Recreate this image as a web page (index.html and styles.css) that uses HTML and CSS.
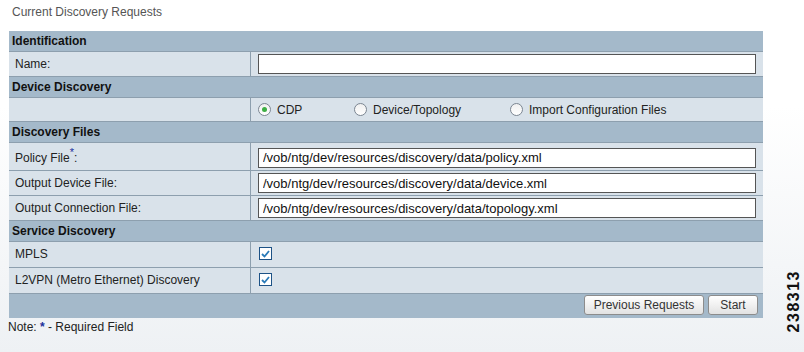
FILE: index.html
```html
<!DOCTYPE html>
<html lang="en">
<head>
  <meta charset="UTF-8" />
  <title>Current Discovery Requests</title>
  <link rel="stylesheet" href="styles.css">
</head>
<body>
  <div class="page">
    <div class="title">Current Discovery Requests</div>

    <table class="form">
      <tr class="head"><td colspan="2">Identification</td></tr>
      <tr>
        <td class="label">Name:</td>
        <td><input class="text" value="" /></td>
      </tr>

      <tr class="head"><td colspan="2">Device Discovery</td></tr>
      <tr class="opts">
        <td class="label"></td>
        <td>
          <div class="radios">
            <span class="opt opt-cdp"><span class="radio on"></span>CDP</span>
            <span class="opt opt-dev"><span class="radio"></span>Device/Topology</span>
            <span class="opt"><span class="radio"></span>Import Configuration Files</span>
          </div>
        </td>
      </tr>

      <tr class="head"><td colspan="2">Discovery Files</td></tr>
      <tr class="tall">
        <td class="label">Policy File<sup class="req">*</sup>:</td>
        <td><input class="text" value="/vob/ntg/dev/resources/discovery/data/policy.xml" /></td>
      </tr>
      <tr>
        <td class="label">Output Device File:</td>
        <td><input class="text" value="/vob/ntg/dev/resources/discovery/data/device.xml" /></td>
      </tr>
      <tr>
        <td class="label">Output Connection File:</td>
        <td><input class="text" value="/vob/ntg/dev/resources/discovery/data/topology.xml" /></td>
      </tr>

      <tr class="head"><td colspan="2">Service Discovery</td></tr>
      <tr class="chk">
        <td class="label">MPLS</td>
        <td><span class="check"><svg width="9" height="8" viewBox="0 0 9 8"><path d="M1 4 L3.5 6.5 L8 1" fill="none" stroke="#2a7ab8" stroke-width="1.8"/></svg></span></td>
      </tr>
      <tr class="chk">
        <td class="label">L2VPN (Metro Ethernet) Discovery</td>
        <td><span class="check"><svg width="9" height="8" viewBox="0 0 9 8"><path d="M1 4 L3.5 6.5 L8 1" fill="none" stroke="#2a7ab8" stroke-width="1.8"/></svg></span></td>
      </tr>

      <tr class="foot">
        <td colspan="2">
          <div class="buttons">
            <button class="btn btn-prev">Previous Requests</button>
            <button class="btn btn-start">Start</button>
          </div>
        </td>
      </tr>
    </table>

    <div class="note">Note: <span class="req">*</span> - Required Field</div>
  </div>

  <div class="figno">238313</div>
</body>
</html>
```

FILE: styles.css
```css
html, body { height: 100%; }
body {
  margin: 0;
  font-family: "Liberation Sans", Arial, sans-serif;
  font-size: 12px;
  color: #222;
  background: linear-gradient(to bottom, #ffffff 0%, #ffffff 30%, #eef1f4 100%);
  position: relative;
  overflow: hidden;
}
.page { padding: 5px 0 0 9px; width: 754px; }
.title { color: #555; padding: 0 0 0 3px; height: 26px; line-height: 14px; }

/* Form table */
.form { width: 754px; border-collapse: collapse; }
.form td { padding: 0; border-top: 1px solid #8d9fae; background: #d9e2ea; height: 24px; }
.form tr.head td {
  background: #a4b9ca;
  font-weight: bold;
  color: #111;
  height: 20px;
  padding-left: 3px;
}
.form tr:first-child td { border-top: none; }
.form tr.opts td { height: 23px; }
.form tr.tall td { height: 25px; padding-top: 2px; }
.form tr.chk td { height: 23px; padding-bottom: 2px; }
.form td.label { width: 238px; padding-left: 6px; border-right: 1px solid #8d9fae; }
.form td:not(.label) { padding-left: 7px; padding-right: 7px; }

.text {
  display: block;
  box-sizing: border-box;
  width: 498px;
  height: 20px;
  border: 1px solid #555;
  font: inherit;
  font-size: 13px;
  padding: 0 4px;
  color: #111;
  background: #fff;
}

.req { color: #1c2f9c; font-weight: bold; }
sup.req { font-size: 11px; font-weight: normal; vertical-align: 6px; line-height: 0; }

/* Radio options */
.radios { display: flex; align-items: center; }
.opt { display: flex; align-items: center; gap: 6px; color: #222; }
.opt-cdp { width: 96px; }
.opt-dev { width: 156px; }
.radio {
  width: 11px; height: 11px;
  border: 1px solid #7a8591;
  border-radius: 50%;
  background: linear-gradient(#f0f0f0, #ffffff);
  position: relative;
}
.radio.on::after {
  content: "";
  position: absolute;
  left: 3px; top: 3px;
  width: 5px; height: 5px;
  border-radius: 50%;
  background: #3cae44;
}

/* Checkboxes */
.check {
  display: flex; align-items: center; justify-content: center;
  width: 11px; height: 11px;
  border: 1px solid #1d5286;
  background: #fff;
  margin-left: 1px;
}

/* Footer bar */
.form tr.foot td { background: #a4b9ca; height: 22px; padding: 0 5px 2px 0; }
.buttons { display: flex; justify-content: flex-end; gap: 4px; }
.btn {
  font-family: "Liberation Sans", Arial, sans-serif;
  font-size: 12px;
  color: #333;
  height: 20px;
  padding: 0;
  border: 1px solid #8c8c8c;
  border-radius: 3px;
  background: linear-gradient(#ffffff, #e2e2e2);
}
.btn-prev { width: 120px; }
.btn-start { width: 50px; }

.note { padding-top: 2px; margin-left: -1px; color: #222; }

.figno {
  position: absolute;
  left: 787px;
  top: 270px;
  writing-mode: vertical-rl;
  transform: rotate(180deg);
  font-weight: bold;
  font-size: 16px;
  letter-spacing: 1.5px;
  line-height: 14px;
  color: #111;
}
```
